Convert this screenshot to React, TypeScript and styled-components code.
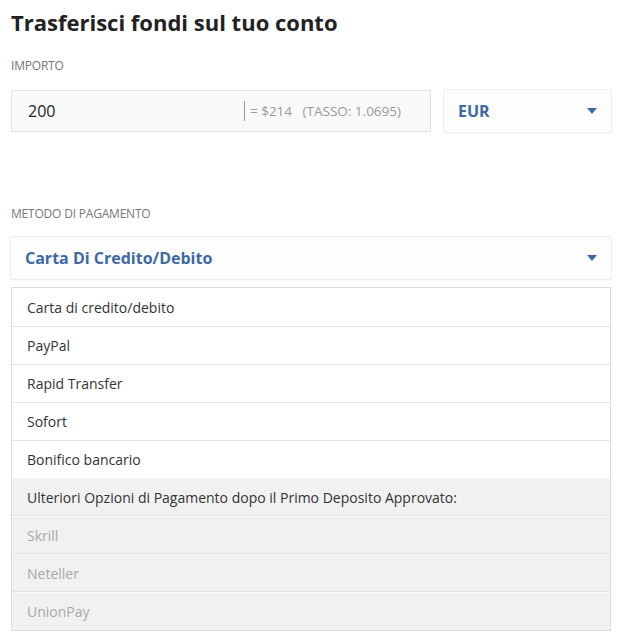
import React from "react";
import styled, { createGlobalStyle } from "styled-components";

const GlobalStyle = createGlobalStyle`
  * {
    box-sizing: border-box;
  }

  body {
    margin: 0;
    background: #ffffff;
    font-family: "Open Sans", "Liberation Sans", sans-serif;
    color: #333333;
  }
`;

const Root = styled.div`
  width: 629px;
  padding: 7px 18px 0 11px;
`;

const Title = styled.h1`
  margin: 0;
  font-size: 22px;
  line-height: 30px;
  font-weight: 700;
  color: #222222;
`;

const Label = styled.div<{ $top: number }>`
  margin-top: ${(p) => p.$top}px;
  font-size: 12px;
  line-height: 16px;
  color: #777777;
  text-transform: uppercase;
  letter-spacing: -0.2px;
`;

const AmountRow = styled.div`
  display: flex;
  gap: 13px;
  margin-top: 16px;
`;

const AmountInput = styled.div`
  width: 420px;
  height: 42px;
  display: flex;
  align-items: center;
  padding: 0 29px 0 16px;
  background: #f9f9f9;
  border: 1px solid #e3e3e3;
`;

const AmountValue = styled.span`
  flex: 1;
  font-size: 16px;
  color: #222222;
`;

const Rate = styled.span`
  display: flex;
  align-items: center;
  height: 20px;
  padding-left: 5px;
  border-left: 1px solid #999999;
  font-size: 13.5px;
  color: #9a9a9a;
  white-space: pre;
`;

const Select = styled.div<{ $width?: number }>`
  width: ${(p) => (p.$width ? `${p.$width}px` : "100%")};
  height: 42px;
  display: flex;
  align-items: center;
  justify-content: space-between;
  padding: 0 14px 0 14px;
  background: #fdfdfd;
  border-radius: 2px;
  box-shadow: 0 0 0 1px #ececec, 0 1px 1px 0 #bdbdbd;
  font-size: 16px;
  font-weight: 700;
  color: #3d68a4;
`;

const Caret = () => (
  <svg width="10" height="6" viewBox="0 0 10 6">
    <path d="M0 0 L10 0 L5 6 Z" fill="#3d68a4" />
  </svg>
);

const SelectWrap = styled.div`
  margin-top: 15px;
`;

const List = styled.ul`
  list-style: none;
  margin: 8px 0 0;
  padding: 0;
  border: 1px solid #dcdcdc;
`;

const Item = styled.li<{ $muted?: boolean; $gray?: boolean }>`
  height: 38px;
  display: flex;
  align-items: center;
  padding-left: 15px;
  font-size: 14px;
  background: ${(p) => (p.$gray ? "#f1f1f1" : "#ffffff")};
  color: ${(p) => (p.$muted ? "#a8a8a8" : "#333333")};
  border-top: 1px solid ${(p) => (p.$gray ? "#fafafa" : "#e4e4e4")};
  box-shadow: ${(p) => (p.$gray ? "inset 0 -1px 0 #e2e2e2" : "none")};

  &:first-child {
    border-top: none;
  }

  &:last-child {
    box-shadow: none;
  }
`;

const methods = [
  "Carta di credito/debito",
  "PayPal",
  "Rapid Transfer",
  "Sofort",
  "Bonifico bancario",
];

const later = ["Skrill", "Neteller", "UnionPay"];

export default function App() {
  return (
    <Root>
      <GlobalStyle />
      <Title>Trasferisci fondi sul tuo conto</Title>

      <Label $top={21}>Importo</Label>
      <AmountRow>
        <AmountInput>
          <AmountValue>200</AmountValue>
          <Rate>{"= $214   (TASSO: 1.0695)"}</Rate>
        </AmountInput>
        <Select $width={167}>
          EUR
          <Caret />
        </Select>
      </AmountRow>

      <Label $top={74}>Metodo di pagamento</Label>
      <SelectWrap>
        <Select>
          Carta Di Credito/Debito
          <Caret />
        </Select>
        <List>
          {methods.map((m) => (
            <Item key={m}>{m}</Item>
          ))}
          <Item $gray>Ulteriori Opzioni di Pagamento dopo il Primo Deposito Approvato:</Item>
          {later.map((m) => (
            <Item key={m} $gray $muted>
              {m}
            </Item>
          ))}
        </List>
      </SelectWrap>
    </Root>
  );
}
